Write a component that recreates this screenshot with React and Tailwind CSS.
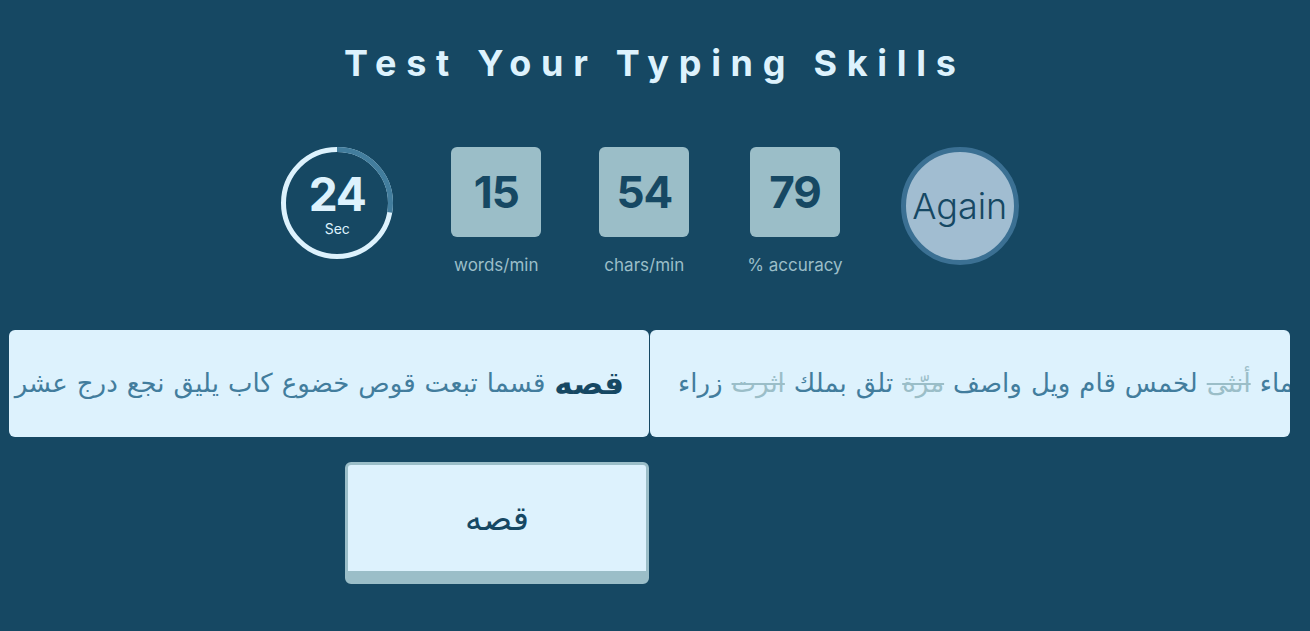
import React from "react";

const remaining = ["قسما", "تبعت", "قوص", "خضوع", "كاب", "يليق", "نجع", "درج", "عشر", "سهم", "ولد", "بحر"];
const typed = [
  { w: "زراء", ok: true },
  { w: "اثرت", ok: false },
  { w: "بملك", ok: true },
  { w: "تلق", ok: true },
  { w: "مرّة", ok: false },
  { w: "واصف", ok: true },
  { w: "ويل", ok: true },
  { w: "قام", ok: true },
  { w: "لخمس", ok: true },
  { w: "أنثى", ok: false },
  { w: "سماء", ok: true },
  { w: "كتب", ok: true },
];

const arabic = { fontFamily: '"DejaVu Sans", Arial, sans-serif' };
const latin = { fontFamily: 'Inter, "DejaVu Sans", sans-serif' };

function Stat({ value, label }) {
  return (
    <div className="flex flex-col items-center">
      <div className="w-[90px] h-[90px] rounded-[6px] bg-[#9BBEC8] flex items-center justify-center">
        <span className="text-[44px] font-bold text-[#164863] leading-none tracking-tight">{value}</span>
      </div>
      <span className="mt-[20px] text-[17px] leading-none text-[#9BBEC8]">{label}</span>
    </div>
  );
}

export default function App() {
  const r = 53.5;
  const c = 2 * Math.PI * r;
  const arc = (100 / 360) * c;
  return (
    <div className="min-h-screen w-full bg-[#164863]" style={latin}>
      <div className="w-[1300px]">
        <h1 className="pt-[45px] text-center text-[36px] leading-none font-bold tracking-[0.27em] text-[#DDF2FD] pl-[0.27em]">
          Test Your Typing Skills
        </h1>

        <div className="mt-[66px] flex justify-center items-start gap-[58px]">
          <div className="relative w-[112px] h-[112px]">
            <svg width="112" height="112" viewBox="0 0 112 112" className="absolute inset-0">
              <circle cx="56" cy="56" r={r} fill="none" stroke="#DDF2FD" strokeWidth="5" />
              <circle
                cx="56"
                cy="56"
                r={r}
                fill="none"
                stroke="#427D9D"
                strokeWidth="5"
                strokeDasharray={`${arc} ${c}`}
                transform="rotate(-90 56 56)"
              />
            </svg>
            <div className="absolute inset-0 flex flex-col items-center justify-center">
              <span className="text-[46px] font-bold leading-none text-[#DDF2FD] tracking-tight">24</span>
              <span className="text-[14px] leading-none text-[#DDF2FD] mt-[5px]">Sec</span>
            </div>
          </div>
          <Stat value="15" label="words/min" />
          <Stat value="54" label="chars/min" />
          <Stat value="79" label="% accuracy" />
          <div className="w-[118px] h-[118px] rounded-full border-[5px] border-[#3B7093] bg-[#A1BDD1] flex items-center justify-center">
            <span className="text-[36px] font-light leading-none text-[#164863]">Again</span>
          </div>
        </div>

        <div className="mt-[56px] pl-[9px] flex gap-[1px]" style={arabic}>
          <div className="w-[640px] h-[107px] rounded-[6px] bg-[#DDF2FD] overflow-hidden flex items-center justify-end pr-[25px]">
            {[...remaining].reverse().map((w, i) => (
              <span key={i} dir="rtl" className="shrink-0 text-[26px] text-[#427D9D] mr-[9px]">
                {w}
              </span>
            ))}
            <span dir="rtl" className="shrink-0 text-[31px] font-bold text-[#164863]">
              قصه
            </span>
          </div>
          <div className="w-[640px] h-[107px] rounded-[6px] bg-[#DDF2FD] overflow-hidden flex items-center justify-start pl-[28px]">
            {typed.map((t, i) => (
              <span
                key={i}
                dir="rtl"
                className={
                  t.ok
                    ? "shrink-0 text-[26px] text-[#427D9D] mr-[9px]"
                    : "shrink-0 text-[26px] text-[#9BBEC8] line-through mr-[9px]"
                }
              >
                {t.w}
              </span>
            ))}
          </div>
        </div>

        <div className="mt-[25px] pl-[345px]">
          <div className="w-[304px] h-[122px] rounded-[6px] border-[3px] border-b-[13px] border-[#9BBEC8] bg-[#DDF2FD] flex items-center justify-center">
            <span dir="rtl" className="text-[34px] text-[#164863]" style={arabic}>
              قصه
            </span>
          </div>
        </div>
      </div>
    </div>
  );
}
